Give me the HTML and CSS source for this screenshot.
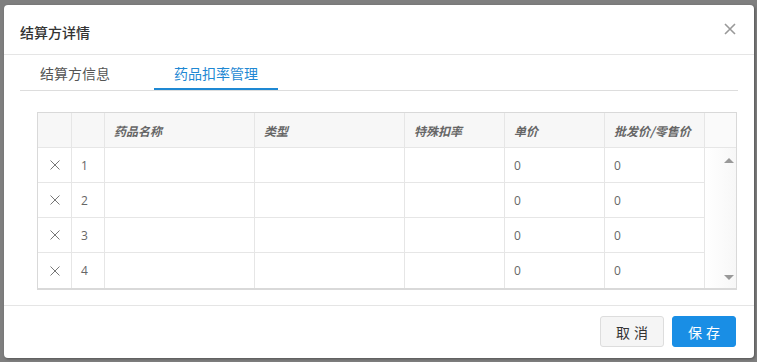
FILE: index.html
```html
<!DOCTYPE html>
<html lang="zh-CN">
<head>
    <meta charset="UTF-8">
    <title>结算方详情</title>
    <link rel="stylesheet" href="styles.css">
</head>
<body>

    <!-- Dialog -->
    <div class="dialog">
        <div class="dialog-header">
            <span class="dialog-title">结算方详情</span>
            <span class="dialog-close">
                <svg width="12" height="12" viewBox="0 0 12 12"><path d="M1 1L11 11M11 1L1 11" stroke="#999" stroke-width="1.6" fill="none"/></svg>
            </span>
        </div>

        <div class="dialog-body">
            <div class="tabs">
                <div class="tab">结算方信息</div>
                <div class="tab active">药品扣率管理</div>
            </div>

            <div class="grid">
                <div class="grid-head">
                    <div class="cell"></div>
                    <div class="cell"></div>
                    <div class="cell">药品名称</div>
                    <div class="cell">类型</div>
                    <div class="cell">特殊扣率</div>
                    <div class="cell">单价</div>
                    <div class="cell">批发价/零售价</div>
                    <div class="cell filler"></div>
                </div>
                <div class="grid-main">
                    <div class="grid-rows">
                        <div class="cell del"><svg width="10" height="10" viewBox="0 0 10 10"><path d="M0.5 0.5L9.5 9.5M9.5 0.5L0.5 9.5" stroke="#777" stroke-width="1" fill="none"/></svg></div>
                        <div class="cell">1</div>
                        <div class="cell"></div>
                        <div class="cell"></div>
                        <div class="cell"></div>
                        <div class="cell">0</div>
                        <div class="cell">0</div>

                        <div class="cell del"><svg width="10" height="10" viewBox="0 0 10 10"><path d="M0.5 0.5L9.5 9.5M9.5 0.5L0.5 9.5" stroke="#777" stroke-width="1" fill="none"/></svg></div>
                        <div class="cell">2</div>
                        <div class="cell"></div>
                        <div class="cell"></div>
                        <div class="cell"></div>
                        <div class="cell">0</div>
                        <div class="cell">0</div>

                        <div class="cell del"><svg width="10" height="10" viewBox="0 0 10 10"><path d="M0.5 0.5L9.5 9.5M9.5 0.5L0.5 9.5" stroke="#777" stroke-width="1" fill="none"/></svg></div>
                        <div class="cell">3</div>
                        <div class="cell"></div>
                        <div class="cell"></div>
                        <div class="cell"></div>
                        <div class="cell">0</div>
                        <div class="cell">0</div>

                        <div class="cell del"><svg width="10" height="10" viewBox="0 0 10 10"><path d="M0.5 0.5L9.5 9.5M9.5 0.5L0.5 9.5" stroke="#777" stroke-width="1" fill="none"/></svg></div>
                        <div class="cell">4</div>
                        <div class="cell"></div>
                        <div class="cell"></div>
                        <div class="cell"></div>
                        <div class="cell">0</div>
                        <div class="cell">0</div>
                    </div>
                    <!-- Scrollbar -->
                    <div class="scrollbar">
                        <span class="arrow up"></span>
                        <span class="arrow down"></span>
                    </div>
                </div>
            </div>
        </div>

        <div class="dialog-footer">
            <button class="btn btn-cancel">取消</button>
            <button class="btn btn-save">保存</button>
        </div>
    </div>

</body>
</html>
```

FILE: styles.css
```css
/* Generel styling */
body {
    margin: 0;
    padding: 5px 3px 4px 4px;
    background: #7f7f7f;
    font-family: "Open Sans", "Noto Sans CJK SC", sans-serif;
    color: #333;
}

/* Dialog */
.dialog {
    width: 750px;
    height: 353px;
    background: #fff;
    border-radius: 4px;
    box-shadow: 1px 1px 3px rgba(0, 0, 0, 0.35);
    display: flex;
    flex-direction: column;
    overflow: hidden;
}

.dialog-header {
    height: 50px;
    border-bottom: 1px solid #e5e5e5;
    display: flex;
    align-items: center;
    justify-content: space-between;
    padding: 0 18px 0 16px;
    box-sizing: border-box;
    flex-shrink: 0;
}

.dialog-title {
    font-family: "Noto Sans CJK SC", sans-serif;
    font-size: 14px;
    font-weight: 500;
    color: #333;
    margin-top: 4px;
}

.dialog-close {
    display: flex;
    margin-top: -2px;
}

.dialog-body {
    flex: 1;
    padding: 0 16px;
}

/* Tabs */
.tabs {
    display: flex;
    border-bottom: 1px solid #ddd;
    height: 36px;
    box-sizing: border-box;
}

.tab {
    font-family: "Noto Sans CJK SC", sans-serif;
    font-size: 14px;
    color: #555;
    padding: 0 20px;
    margin-right: 24px;
    line-height: 36px;
    height: 35px;
    box-sizing: border-box;
}

.tab.active {
    color: #1e88d3;
    border-bottom: 2px solid #1e88d3;
}

/* Grid */
.grid {
    margin: 21px 2px 0 17px;
    border: 1px solid #d9d9d9;
    border-bottom-width: 2px;
    width: 700px;
    box-sizing: border-box;
}

.grid-head,
.grid-rows {
    display: grid;
    grid-template-columns: 34px 33px 150px 150px 100px 100px 100px;
}

.grid-head {
    grid-template-columns: 34px 33px 150px 150px 100px 100px 100px 31px;
    background: #f7f7f7;
}

.cell {
    height: 35px;
    box-sizing: border-box;
    border-right: 1px solid #e6e6e6;
    border-bottom: 1px solid #e6e6e6;
    font-size: 12px;
    color: #666;
    display: flex;
    align-items: center;
    padding-left: 9px;
}

.grid-head .cell {
    font-family: "Noto Sans CJK SC", sans-serif;
    font-style: italic;
    font-weight: bold;
    color: #666;
}

.grid-head .filler {
    border-right: none;
    background: #fafafa;
}

.grid-rows .cell:nth-last-child(-n+7) {
    border-bottom: none;
}

.cell.del {
    padding-left: 12px;
}

.grid-main {
    display: flex;
}

/* Scrollbar */
.scrollbar {
    width: 31px;
    background: linear-gradient(to right, #fff, #f7f7f7);
    position: relative;
}

.arrow {
    position: absolute;
    right: 2px;
    width: 0;
    height: 0;
    border-left: 5px solid transparent;
    border-right: 5px solid transparent;
}

.arrow.up {
    top: 10px;
    border-bottom: 5px solid #999;
}

.arrow.down {
    bottom: 8px;
    border-top: 5px solid #999;
}

/* Footer */
.dialog-footer {
    height: 53px;
    border-top: 1px solid #e5e5e5;
    display: flex;
    justify-content: flex-end;
    align-items: flex-start;
    gap: 8px;
    padding: 10px 18px 0 0;
    box-sizing: border-box;
    flex-shrink: 0;
}

.btn {
    width: 64px;
    height: 31px;
    border-radius: 3px;
    font-family: "Noto Sans CJK SC", sans-serif;
    font-size: 14px;
    letter-spacing: 4px;
    text-indent: 4px;
    cursor: pointer;
}

.btn-cancel {
    background: #f5f5f5;
    border: 1px solid #ddd;
    color: #333;
}

.btn-save {
    background: #198ee5;
    border: 1px solid #198ee5;
    color: #fff;
}
```
